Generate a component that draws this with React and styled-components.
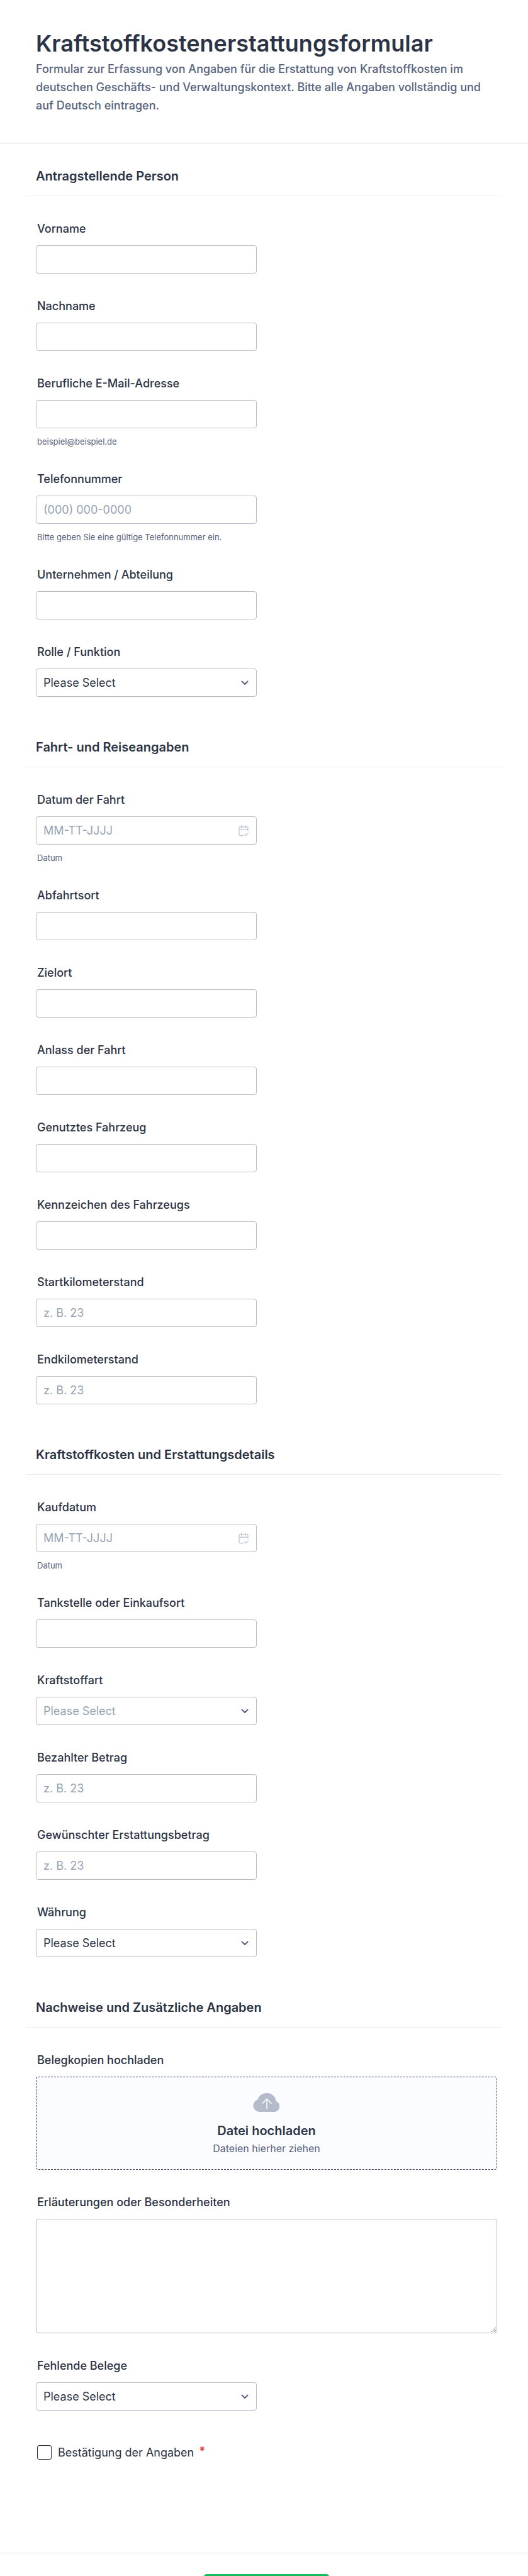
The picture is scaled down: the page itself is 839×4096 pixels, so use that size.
import React,{useState} from 'react'
import styled,{createGlobalStyle} from 'styled-components'

const sections = [
    {
        title: 'Antragstellende Person',
        fields: [
            {id: 'vorname', label: 'Vorname'},
            {id: 'nachname', label: 'Nachname'},
            {id: 'email', label: 'Berufliche E-Mail-Adresse', type: 'email', hint: 'beispiel@beispiel.de'},
            {id: 'telefon', label: 'Telefonnummer', type: 'tel', placeholder: '(000) 000-0000', hint: 'Bitte geben Sie eine gültige Telefonnummer ein.'},
            {id: 'abteilung', label: 'Unternehmen / Abteilung'},
            {id: 'rolle', label: 'Rolle / Funktion', kind: 'select'},
        ],
    },
    {
        title: 'Fahrt- und Reiseangaben',
        fields: [
            {id: 'fahrtdatum', label: 'Datum der Fahrt', kind: 'date', hint: 'Datum'},
            {id: 'abfahrtsort', label: 'Abfahrtsort'},
            {id: 'zielort', label: 'Zielort'},
            {id: 'anlass', label: 'Anlass der Fahrt'},
            {id: 'fahrzeug', label: 'Genutztes Fahrzeug'},
            {id: 'kennzeichen', label: 'Kennzeichen des Fahrzeugs'},
            {id: 'startkm', label: 'Startkilometerstand', placeholder: 'z. B. 23'},
            {id: 'endkm', label: 'Endkilometerstand', placeholder: 'z. B. 23'},
        ],
    },
    {
        title: 'Kraftstoffkosten und Erstattungsdetails',
        fields: [
            {id: 'kaufdatum', label: 'Kaufdatum', kind: 'date', hint: 'Datum'},
            {id: 'tankstelle', label: 'Tankstelle oder Einkaufsort'},
            {id: 'kraftstoff', label: 'Kraftstoffart', kind: 'select', muted: true},
            {id: 'betrag', label: 'Bezahlter Betrag', placeholder: 'z. B. 23'},
            {id: 'erstattung', label: 'Gewünschter Erstattungsbetrag', placeholder: 'z. B. 23'},
            {id: 'waehrung', label: 'Währung', kind: 'select'},
        ],
    },
    {
        title: 'Nachweise und Zusätzliche Angaben',
        fields: [
            {id: 'belege', label: 'Belegkopien hochladen', kind: 'upload'},
            {id: 'erlaeuterung', label: 'Erläuterungen oder Besonderheiten', kind: 'textarea'},
            {id: 'fehlend', label: 'Fehlende Belege', kind: 'select'},
        ],
    },
]

function Chevron() {
  return (
    <ControlIcon width="12" height="8" viewBox="0 0 12 8" fill="none" stroke="#57647e" strokeWidth="2" aria-hidden="true">
        <path d="M1.5 1.5L6 6L10.5 1.5" strokeLinecap="round" strokeLinejoin="round"/>
    </ControlIcon>
  )
}

function CalendarIcon() {
  return (
    <ControlIcon width="16" height="18" viewBox="0 0 16 18" fill="none" stroke="#c3c9d6" strokeWidth="1.4" aria-hidden="true">
        <path d="M15 9V4.5A1.8 1.8 0 0 0 13.2 2.7H2.8A1.8 1.8 0 0 0 1 4.5V15A1.8 1.8 0 0 0 2.8 16.8H7.5M1 7.2H15M4.8 .7V4.6M11.2 .7V4.6" strokeLinecap="round"/>
        <path d="M9.6 14.7L11.4 16.5L15.2 12.7" strokeLinecap="round" strokeLinejoin="round"/>
    </ControlIcon>
  )
}

function CloudIcon() {
  return (
    <svg width="44" height="30" viewBox="0 0 44 30" fill="none" aria-hidden="true">
        <path d="M10 30A10 10 0 0 1 8 10.3C9.3 4.2 15 0 22 0C29.7 0 36 5.6 36.6 12.9A9 9 0 0 1 35 30Z" fill="#b4bccc"/>
        <path d="M22 25V9.5M15 16.5L22 9.5L29 16.5" stroke="#fff" strokeWidth="1.4" strokeLinecap="round" strokeLinejoin="round"/>
    </svg>
  )
}

function Control({field}) {
    const {id,kind,type,placeholder,muted} = field;
    if (kind==='select') {
        return (
            <ControlBox>
                <Select id={id} $muted={muted}>
                    <option>Please Select</option>
                </Select>
                <Chevron/>
            </ControlBox>
        )
    }
    if (kind==='date') {
        return (
            <ControlBox>
                <Input id={id} type="text" placeholder="MM-TT-JJJJ"/>
                <CalendarIcon/>
            </ControlBox>
        )
    }
    if (kind==='upload') {
        return (
            <UploadButton id={id} type="button">
                <CloudIcon/>
                <UploadTitle>Datei hochladen</UploadTitle>
                <UploadText>Dateien hierher ziehen</UploadText>
            </UploadButton>
        )
    }
    if (kind==='textarea') {
        return <TextArea id={id}/>
    }
    return (
        <ControlBox>
            <Input id={id} type={type || 'text'} placeholder={placeholder}/>
        </ControlBox>
    )
}

function App() {
    const [confirmed,setConfirmed] = useState(false);
  return (
    <Page>
        <GlobalStyle/>
        <Header>
            <Title>Kraftstoffkostenerstattungsformular</Title>
            <Intro>
                Formular zur Erfassung von Angaben für die Erstattung von Kraftstoffkosten im deutschen Geschäfts- und Verwaltungskontext. Bitte alle Angaben vollständig und auf Deutsch eintragen.
            </Intro>
        </Header>
        <form onSubmit={(e)=>e.preventDefault()}>
            <Sections>
                {sections.map((section)=>(
                    <Section key={section.title}>
                        <SectionTitle>{section.title}</SectionTitle>
                        <Fields>
                            {section.fields.map((field)=>(
                                <Field key={field.id}>
                                    <Label htmlFor={field.id}>{field.label}</Label>
                                    <Control field={field}/>
                                    {field.hint&&(<Hint>{field.hint}</Hint>)}
                                </Field>
                            ))}
                        </Fields>
                    </Section>
                ))}
                <Confirm>
                    <Checkbox type="checkbox" checked={confirmed} onChange={(e)=>setConfirmed(e.target.checked)}/>
                    <span>Bestätigung der Angaben</span>
                    <Required>*</Required>
                </Confirm>
            </Sections>
            <Footer>
                <SubmitButton type="submit" aria-label="Absenden"/>
            </Footer>
        </form>
    </Page>
  )
}

export default App

const GlobalStyle = createGlobalStyle`
    *, *::before, *::after {
        box-sizing: border-box;
    }
    body {
        margin: 0;
        background-color: #fff;
        color: #2c3345;
        font-family: Inter, "Liberation Sans", sans-serif;
    }
    input, select, textarea, button {
        font-family: inherit;
        margin: 0;
    }
`
const Page = styled.main`
    height: 100vh;
    overflow: hidden;
`
const Header = styled.header`
    padding: 47px 57px 45px;
    border-bottom: 1px solid #d3dae2;
`
const Title = styled.h1`
    margin: 0 0 4px;
    font-size: 36px;
    line-height: 44px;
    font-weight: 600;
`
const Intro = styled.p`
    margin: 0;
    font-size: 18px;
    line-height: 29px;
    font-weight: 500;
    color: #57647e;
`
const Sections = styled.div`
    display: flex;
    flex-direction: column;
    gap: 42px;
    padding: 14px 42px 148px 41px;
`
const Section = styled.section`
    display: flex;
    flex-direction: column;
    gap: 42px;
`
const SectionTitle = styled.h2`
    margin: 0;
    padding: 26px 16px 19px;
    border-bottom: 1px solid #ebecef;
    font-size: 20px;
    line-height: 24px;
    font-weight: 600;
`
const Fields = styled.div`
    display: flex;
    flex-direction: column;
    gap: 42px;
    padding: 0 7px 0 16px;
`
const Field = styled.div`
    display: flex;
    flex-direction: column;
`
const Label = styled.label`
    padding-left: 2px;
    margin-bottom: 16px;
    font-size: 18px;
    line-height: 20px;
    font-weight: 500;
`
const ControlBox = styled.div`
    display: grid;
    align-items: center;
    width: 100%;
    max-width: 351px;
`
const Input = styled.input`
    grid-area: 1 / 1;
    width: 100%;
    height: 45px;
    padding: 0 11px;
    border: 1px solid #b8bdc9;
    border-radius: 4px;
    background-color: #fff;
    color: #2c3345;
    font-size: 18px;
    &::placeholder {
        color: #95a3b3;
        opacity: 1;
    }
`
const Select = styled.select`
    grid-area: 1 / 1;
    appearance: none;
    width: 100%;
    height: 45px;
    padding: 0 32px 0 11px;
    border: 1px solid #b8bdc9;
    border-radius: 4px;
    background-color: #fff;
    color: ${props =>props.$muted ? '#95a3b3' : '#2c3345'};
    font-size: 18px;
`
const ControlIcon = styled.svg`
    grid-area: 1 / 1;
    justify-self: end;
    margin-right: 13px;
    pointer-events: none;
`
const TextArea = styled.textarea`
    display: block;
    width: 100%;
    height: 182px;
    padding: 11px;
    border: 1px solid #b8bdc9;
    border-radius: 4px;
    background-color: #fff;
    color: #2c3345;
    font-size: 18px;
    resize: vertical;
`
const Hint = styled.span`
    padding-left: 2px;
    margin-top: 13px;
    font-size: 13px;
    line-height: 16px;
    color: #57647e;
`
const UploadButton = styled.button`
    display: flex;
    flex-direction: column;
    align-items: center;
    width: 100%;
    height: 148px;
    padding: 25px 16px 0;
    border: 1px dashed #2c3345;
    border-radius: 4px;
    background-color: #fbfcff;
    color: #2c3345;
`
const UploadTitle = styled.span`
    margin-top: 18px;
    font-size: 20px;
    line-height: 24px;
    font-weight: 600;
`
const UploadText = styled.span`
    margin-top: 4px;
    font-size: 16px;
    line-height: 24px;
    color: #57647e;
`
const Confirm = styled.label`
    display: flex;
    align-items: center;
    padding: 13px 18px 0;
    font-size: 18px;
    line-height: 23px;
`
const Checkbox = styled.input`
    appearance: none;
    width: 23px;
    height: 23px;
    border: 1px solid #2c3345;
    border-radius: 3px;
    background-color: #fff;
    &:checked {
        background-color: #2c3345;
    }
    & + span {
        margin-left: 10px;
    }
`
const Required = styled.span`
    align-self: flex-start;
    margin-left: 8px;
    color: #f23a3c;
    line-height: 18px;
    font-weight: 700;
`
const Footer = styled.footer`
    display: flex;
    justify-content: center;
    padding: 33px 49px 33px 57px;
    border-top: 1px solid #e3e5f0;
`
const SubmitButton = styled.button`
    width: 199px;
    height: 48px;
    border: 1px solid #18bd5b;
    border-radius: 4px;
    background-color: #18bd5b;
`
